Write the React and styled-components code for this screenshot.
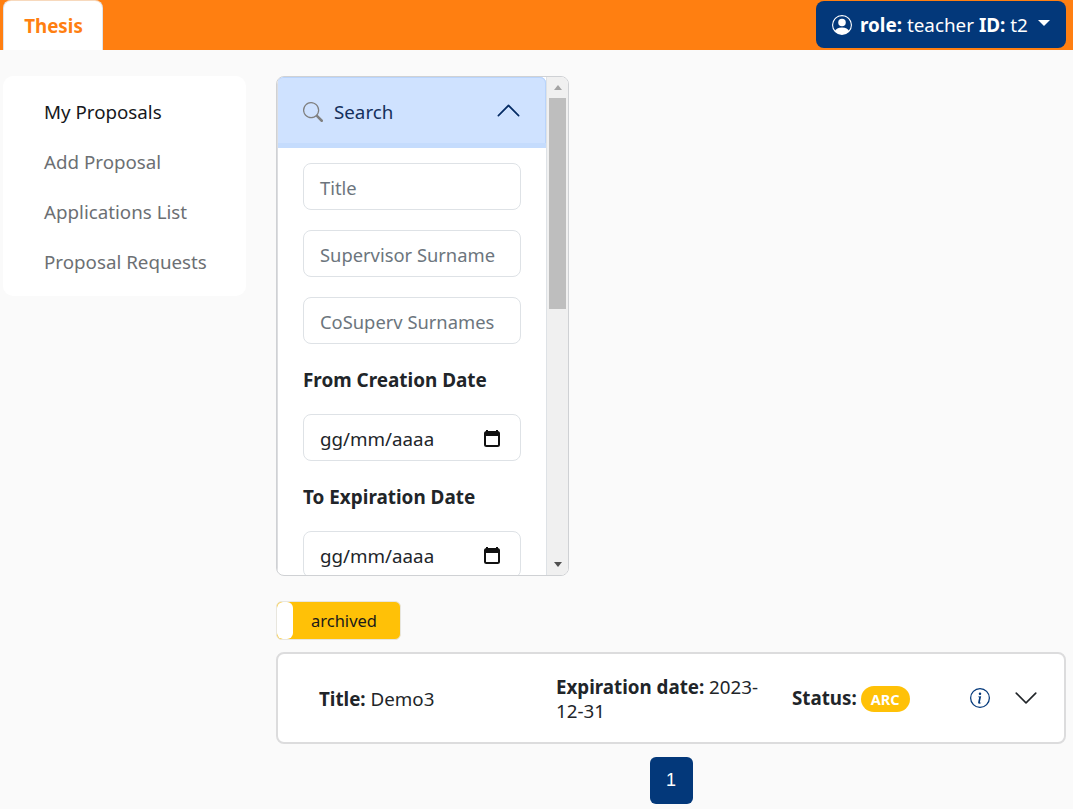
import React from "react";
import styled, { createGlobalStyle } from "styled-components";
import { BsSearch, BsChevronDown, BsChevronUp, BsInfoCircle, BsPersonCircle } from "react-icons/bs";

const Global = createGlobalStyle`
  html, body { margin: 0; padding: 0; background: #fafafa; }
  body { font-family: "Noto Sans", "Open Sans", sans-serif; font-size: 18.75px; color: #212529; height: 809px; overflow: hidden; }
  * { box-sizing: border-box; }
`;

const Navbar = styled.header`
  height: 50px; background: #ff7f11; display: flex; justify-content: space-between;
  padding: 0 7px 0 3px; align-items: flex-start;
`;
const BrandTab = styled.div`
  width: 100px; height: 50px; background: #fff; border-radius: 8px 8px 0 0;
  border-style: solid; border-width: 1px 1px 0 1px; border-color: #f7d9bd #dfe4ea transparent;
  color: #ff7f11; font-weight: 700; font-size: 18.75px; display: flex; align-items: center; justify-content: center; padding-left: 1px;
`;
const UserButton = styled.div`
  margin-top: 1px; width: 250px; height: 47px; background: #03387a; color: #fff; border-radius: 8px;
  display: flex; align-items: center; padding-left: 16px; font-size: 18.85px; white-space: pre;
  svg { margin-right: 8px; }
`;
const Caret = styled.span`
  margin-left: 10px; margin-bottom: 3px; width: 0; height: 0;
  border-left: 6px solid transparent; border-right: 6px solid transparent; border-top: 6px solid #fff;
`;
const Body = styled.div`
  display: grid; grid-template-columns: 243px 1fr; column-gap: 30px; padding: 26px 7px 0 3px;
`;
const Sidebar = styled.nav`
  background: #fff; border-radius: 10px; height: 220px; padding: 10px 0 10px 41px;
  display: flex; flex-direction: column;
`;
const NavItem = styled.div`
  height: 50px; display: flex; align-items: center;
  color: ${p => (p.$active ? "#16181b" : "#6c6f73")};
`;
const Main = styled.main`
  display: flex; flex-direction: column; align-items: stretch;
`;
const Panel = styled.section`
  width: 293px; height: 500px; border: 1px solid #cfd1d4; border-radius: 8px; background: #fff;
  display: flex; overflow: hidden;
`;
const ScrollArea = styled.div`
  flex: 1; min-width: 0; overflow: hidden; border-right: 1px solid #dee2e6; border-left: 1px solid #dcdde0;
`;
const AccordionHead = styled.div`
  height: 71px; background: #cfe2ff; border-bottom: 5px solid #c5dcfd; border-radius: 6px 6px 0 0;
  box-shadow: inset 0 1px 0 #b9d4fb, inset -1px 0 0 #b9d4fb;
  display: flex; align-items: center;
  padding: 3px 24px 0 26px; margin-left: -1px; color: #052c65;
  svg.search { color: #808080; margin-right: 11px; }
  svg.chev { margin-left: auto; margin-top: -3px; }
  span { color: #14305c; }
`;
const Form = styled.div`
  padding: 15px 25px 0 25px; display: flex; flex-direction: column; gap: 20px;
`;
const Field = styled.div`
  width: 218px; height: 47px; border: 1px solid #dee2e6; border-radius: 8px; background: #fff; flex: none;
  display: flex; align-items: center; justify-content: space-between; padding: 1px 19px 0 16px;
  color: ${p => (p.$date ? "#212529" : "#6c757d")};
  font-size: ${p => (p.$date ? "18.75px" : "18.35px")};
`;
const Label = styled.div`
  font-weight: 700; color: #212529; font-size: 18.9px; line-height: 26px; margin: 3px 0 1px;
`;
const Scrollbar = styled.div`
  width: 21px; flex: none; background: #f0f0f0; display: flex; flex-direction: column; align-items: center; padding: 0 2px;
`;
const Arrow = styled.div`
  height: 21px; width: 100%; flex: none; display: flex; align-items: center; justify-content: center;
  &::before { content: ""; border-left: 4.5px solid transparent; border-right: 4.5px solid transparent;
    ${p => (p.$up ? "border-bottom: 5px solid #a3a3a3;" : "border-top: 5px solid #505050;")} }
`;
const Thumb = styled.div`
  width: 100%; height: 211px; flex: none; background: #bebebe;
`;
const Track = styled.div`flex: 1;`;
const Toggle = styled.div`
  margin-top: 25px; width: 125px; height: 39px; background: #ffc107; border: 1px solid #e8e6de; border-radius: 6px;
  display: flex; align-items: center; overflow: hidden; font-size: 16.5px; color: #1a1a1a;
`;
const Knob = styled.span`
  width: 16px; height: 37px; background: #fff; border-radius: 6px; flex: none;
`;
const ToggleLabel = styled.span`
  flex: 1; text-align: center; padding-right: 5px;
`;
const Card = styled.article`
  margin-top: 12px; height: 92px; background: #fff; border: 2px solid #dcdcdd; border-radius: 8px;
  display: grid; grid-template-columns: 237px 212px 24px 177px 1fr; align-items: center; padding: 1px 0 0 41px;
  line-height: 24px;
`;
const Expiry = styled.div`grid-column: 2;`;
const Status = styled.div`grid-column: 4; white-space: nowrap;`;
const Badge = styled.span`
  display: inline-block; background: #ffc107; color: #fff; font-weight: 700; font-size: 14.5px;
  border-radius: 13px; padding: 0 10px; line-height: 26px; height: 26px; margin-left: 4px; vertical-align: 0;
`;
const Actions = styled.div`
  display: flex; align-items: center; gap: 23px; padding-left: 1px; margin-top: -2px;
  svg.info { color: #03387a; }
  svg.chev { color: #212529; }
`;
const Pager = styled.div`
  display: flex; justify-content: center; margin-top: 13px;
`;
const PageButton = styled.div`
  width: 43px; height: 47px; background: #03387a; color: #fff; border-radius: 6px;
  display: flex; align-items: center; justify-content: center; font-family: "Liberation Sans", sans-serif; font-size: 18px;
`;

const CalendarIcon = () => (
  <svg width="18" height="18" viewBox="0 0 18 18" fill="none">
    <path d="M4 1v3M14 1v3" stroke="#111" strokeWidth="2" />
    <rect x="2" y="3" width="14" height="14" rx="1.5" stroke="#111" strokeWidth="2" />
    <rect x="2" y="3" width="14" height="4" fill="#111" />
  </svg>
);

export default function App() {
  return (
    <>
      <Global />
      <Navbar>
        <BrandTab>Thesis</BrandTab>
        <UserButton>
          <BsPersonCircle size={20} />
          <b>role:</b> teacher <b>ID:</b> t2
          <Caret />
        </UserButton>
      </Navbar>
      <Body>
        <Sidebar>
          <NavItem $active>My Proposals</NavItem>
          <NavItem>Add Proposal</NavItem>
          <NavItem>Applications List</NavItem>
          <NavItem>Proposal Requests</NavItem>
        </Sidebar>
        <Main>
          <Panel>
            <ScrollArea>
              <AccordionHead>
                <BsSearch className="search" size={20} />
                <span>Search</span>
                <BsChevronUp className="chev" size={27} />
              </AccordionHead>
              <Form>
                <Field>Title</Field>
                <Field>Supervisor Surname</Field>
                <Field>CoSuperv Surnames</Field>
                <Label>From Creation Date</Label>
                <Field $date>gg/mm/aaaa<CalendarIcon /></Field>
                <Label>To Expiration Date</Label>
                <Field $date>gg/mm/aaaa<CalendarIcon /></Field>
              </Form>
            </ScrollArea>
            <Scrollbar>
              <Arrow $up />
              <Thumb />
              <Track />
              <Arrow />
            </Scrollbar>
          </Panel>
          <Toggle>
            <Knob />
            <ToggleLabel>archived</ToggleLabel>
          </Toggle>
          <Card>
            <div><b>Title:</b> Demo3</div>
            <Expiry><b>Expiration date:</b> 2023-12-31</Expiry>
            <Status><b>Status:</b><Badge>ARC</Badge></Status>
            <Actions>
              <BsInfoCircle className="info" size={20} />
              <BsChevronDown className="chev" size={26} />
            </Actions>
          </Card>
          <Pager>
            <PageButton>1</PageButton>
          </Pager>
        </Main>
      </Body>
    </>
  );
}
